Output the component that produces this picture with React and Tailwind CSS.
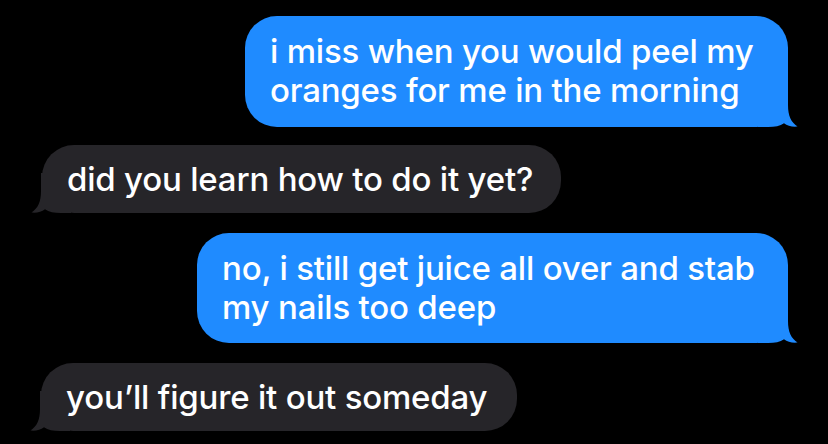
import React from 'react'

const Tail = ({ side, color }) => (
  <svg
    viewBox="0 0 40 40"
    className={`absolute bottom-0 w-[40px] h-[40px] ${side === 'right' ? 'right-[-10px]' : 'left-[-11px] -scale-x-100'}`}
  >
    <path
      d="M0 0 L30 0 L30 18 C30 29 33 35 39.5 39.6 C34 40.2 29.5 38.8 26 36.2 C22 39 17 40 10 40 L0 40 Z"
      fill={color}
    />
  </svg>
)

const Bubble = ({ mine, lines, className }) => {
  const color = mine ? '#1f8bff' : '#262529'
  return (
    <div
      className={`relative rounded-[32px] text-white text-[33px] leading-[39px] font-medium tracking-[-0.2px] pl-[25px] ${
        mine ? 'self-end bg-[#1f8bff]' : 'self-start bg-[#262529]'
      } ${className}`}
    >
      <Tail side={mine ? 'right' : 'left'} color={color} />
      <p className="relative whitespace-nowrap">
        {lines.map((l, i) => (
          <span key={i} className="block">{l}</span>
        ))}
      </p>
    </div>
  )
}

export default function App() {
  return (
    <div
      className="w-[828px] h-[444px] bg-black overflow-hidden flex flex-col px-[40px] pt-[16px]"
      style={{ fontFamily: 'Inter, "Liberation Sans", sans-serif' }}
    >
      <Bubble
        mine
        className="w-[543px] pt-[16px] pb-[17px]"
        lines={['i miss when you would peel my', 'oranges for me in the morning']}
      />
      <Bubble
        className="w-[519px] mt-[18px] ml-[2px] pt-[15px] pb-[14px]"
        lines={['did you learn how to do it yet?']}
      />
      <Bubble
        mine
        className="w-[591px] mt-[20px] pt-[16px] pb-[16px]"
        lines={['no, i still get juice all over and stab', 'my nails too deep']}
      />
      <Bubble
        className="w-[476px] mt-[20px] ml-[1px] pt-[15px] pb-[14px]"
        lines={['you\u2019ll figure it out someday']}
      />
    </div>
  )
}
